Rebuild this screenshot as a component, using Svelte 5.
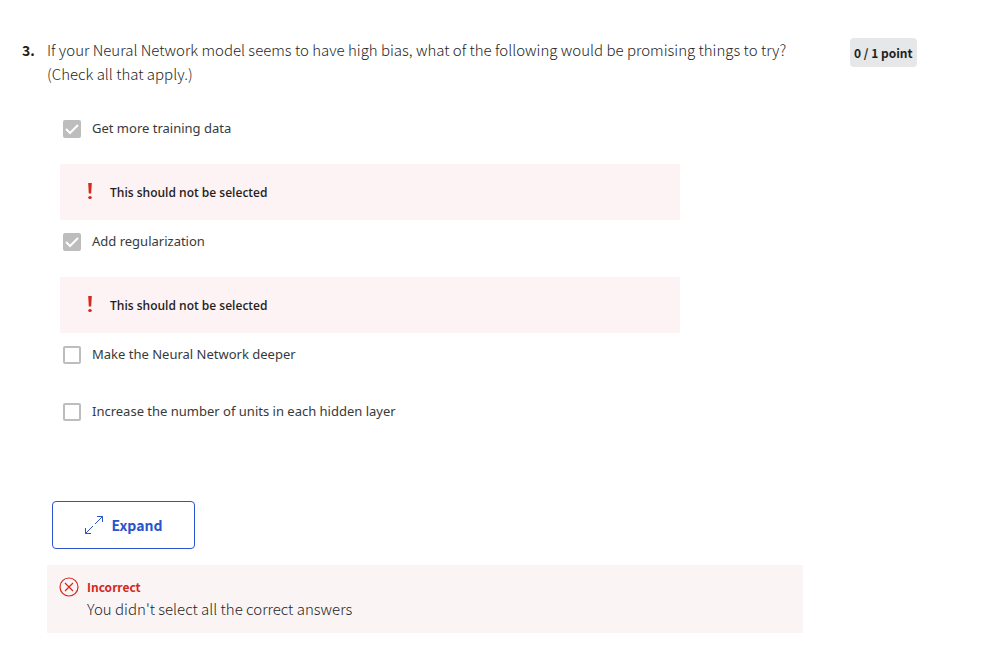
<script>
  const answers = [
    { text: 'Get more training data', checked: true },
    { text: 'Add regularization', checked: true },
    { text: 'Make the Neural Network deeper', checked: false },
    { text: 'Increase the number of units in each hidden layer', checked: false }
  ];
</script>

<main class="question">
  <div class="number">3.</div>
  <div class="body">
    <p class="prompt">If your Neural Network model seems to have high bias, what of the following would be promising things to try?<br />(Check all that apply.)</p>
    <div class="answers">
      {#each answers as a}
        <div class="answer">
          <label><input type="checkbox" checked={a.checked} /><span>{a.text}</span></label>
          {#if a.checked}
            <div class="feedback">
              <svg width="6" height="18" viewBox="0 0 6 18" fill="#d3281e"><path d="M1.200 1h3.600l-.6 10.500h-2.400z" /><ellipse cx="3" cy="15.500" rx="1.800" ry="1.500" /></svg>
              <strong>This should not be selected</strong>
            </div>
          {/if}
        </div>
      {/each}
    </div>
    <button class="expand">
      <svg width="18" height="18" viewBox="0 0 18 18" fill="none" stroke="#2a53cd"><path d="M12 .5h5.500V6M17.500 .5L10 8M.5 12v5.500H6M.5 17.500L8 10" /></svg>
      Expand
    </button>
    <div class="result">
      <svg width="20" height="20" viewBox="0 0 20 20" fill="none" stroke="#d3281e" stroke-width="1.200"><circle cx="10" cy="10" r="9" /><path d="M6 6l8 8M14 6l-8 8" /></svg>
      <div><strong>Incorrect</strong><p>You didn't select all the correct answers</p></div>
    </div>
  </div>
  <div class="score"><span>0 / 1 point</span></div>
</main>

<style>
  :global(body) { background: #fff; }
  .question { display: flex; padding: 38px 24px 32px 22px; font-family: "Noto Sans CJK SC", "Noto Sans", sans-serif; color: #373a3c; font-size: 14px; line-height: 24px; }
  .number { width: 25px; flex: none; font-weight: 700; color: #1f1f1f; }
  .body { flex: 0 1 756px; }
  p { margin: 0; font-size: 15px; font-weight: 300; color: #1f1f1f; }
  .answers { padding: 30px 0 0 13px; }
  .answer { display: flex; flex-direction: column; gap: 24px; min-height: 48px; margin-bottom: 9px; }
  label { display: flex; align-items: center; gap: 11px; padding: 0 3px; height: 24px; font-family: "Noto Sans", sans-serif; font-size: 13px; }
  input { appearance: none; box-sizing: border-box; width: 18px; height: 18px; margin: 1px 0 0; border: 2px solid #bdbdbd; border-radius: 2px; }
  input:checked { border: 0; background: #bdbdbd url("data:image/svg+xml,%3Csvg xmlns='http://www.w3.org/2000/svg' viewBox='0 0 18 18'%3E%3Cpath d='M3 9l4 4 8-8' fill='none' stroke='white' stroke-width='2'/%3E%3C/svg%3E"); }
  .feedback { display: flex; align-items: center; gap: 17px; max-width: 620px; height: 56px; padding: 1px 0 0 27px; box-sizing: border-box; background: #fef3f4; font-family: "Open Sans", sans-serif; font-size: 12px; }
  .feedback strong { font-weight: 600; color: #1f1f1f; }
  .feedback svg { margin-bottom: 4px; }
  .expand { display: flex; align-items: center; justify-content: center; gap: 9px; width: 143px; height: 48px; margin: 54px 0 16px 5px; border: 1px solid #2a53cd; border-radius: 4px; background: #fff; color: #2a53cd; font: inherit; font-weight: 700; }
  .result { display: flex; gap: 8px; padding: 11px 12px 13px; background: #fbf4f4; line-height: 22px; }
  .result svg { margin-top: 1px; }
  .result strong { display: block; font-size: 12px; color: #d3281e; }
  .score { margin-left: 47px; }
  .score span { display: block; padding: 3px 4px 2px; border-radius: 4px; background: #e5e7e8; color: #1f1f1f; font-size: 12px; font-weight: 700; }
</style>
